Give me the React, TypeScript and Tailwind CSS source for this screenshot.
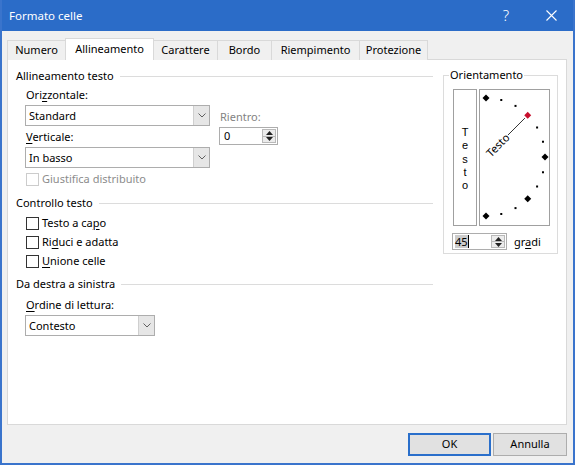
import React from "react";

function Chevron() {
  return (
    <svg width="8" height="5" viewBox="0 0 8 5">
      <path d="M0.5 0.5 L4 4 L7.5 0.5" stroke="#606060" strokeWidth="1" fill="none" />
    </svg>
  );
}

function Combo({ className, text }: { className: string; text: string }) {
  return (
    <div className={`flex h-[21px] border border-[#adadad] bg-white ${className}`}>
      <div className="flex-1 pl-[3px] leading-[19px]">{text}</div>
      <div className="w-[16px] border-l border-[#cfcfcf] bg-[#e6e6e6] flex items-center justify-center">
        <Chevron />
      </div>
    </div>
  );
}

function SpinButtons() {
  return (
    <div className="w-[14px] my-[1px] mr-[1px] flex flex-col border border-[#b9b9b9] bg-[#ececec]">
      <div className="flex-1 flex items-center justify-center">
        <svg width="7" height="4" viewBox="0 0 7 4">
          <polygon points="0,4 3.5,0 7,4" fill="#222" />
        </svg>
      </div>
      <div className="flex-1 flex items-center justify-center border-t border-[#b9b9b9]">
        <svg width="7" height="4" viewBox="0 0 7 4">
          <polygon points="0,0 3.5,4 7,0" fill="#222" />
        </svg>
      </div>
    </div>
  );
}

function Header({ children }: { children: React.ReactNode }) {
  return (
    <div className="flex items-center h-[16px] leading-[16px]">
      <span>{children}</span>
      <div className="flex-1 h-px bg-[#dcdcdc] ml-[6px]" />
    </div>
  );
}

function Check({ className, children, disabled }: { className: string; children: React.ReactNode; disabled?: boolean }) {
  return (
    <div className={`flex items-center h-[16px] leading-[16px] pl-[10px] ${className}`}>
      <div className={`w-[13px] h-[13px] border bg-white ${disabled ? "border-[#cccccc]" : "border-[#333333]"}`} />
      <span className={`ml-[3px] ${disabled ? "text-[#8c8c8c]" : ""}`}>{children}</span>
    </div>
  );
}

function Dial() {
  const cx = 6;
  const cy = 67;
  const r = 59;
  const items: React.ReactNode[] = [];
  for (let a = 90; a >= -90; a -= 15) {
    const rad = (a * Math.PI) / 180;
    const x = cx + r * Math.cos(rad);
    const y = cy - r * Math.sin(rad);
    if (a % 45 === 0) {
      const d = 3.5;
      items.push(
        <polygon
          key={a}
          points={`${x},${y - d} ${x + d},${y} ${x},${y + d} ${x - d},${y}`}
          fill={a === 45 ? "#c8102e" : "#000"}
        />
      );
    } else {
      items.push(<rect key={a} x={x - 1} y={y - 1} width="2" height="2" fill="#000" />);
    }
  }
  const c = Math.SQRT1_2;
  return (
    <svg width="69" height="135" viewBox="0 0 69 135">
      {items}
      <line x1={cx + 31 * c} y1={cy - 31 * c} x2={cx + 55 * c} y2={cy - 55 * c} stroke="#000" strokeWidth="0.8" />
      <text
        x={cx + 3}
        y={cy + 4}
        transform={`rotate(-45 ${cx} ${cy})`}
        fontSize="11"
        fontFamily="'Noto Sans', sans-serif"
        fill="#000"
      >
        Testo
      </text>
    </svg>
  );
}

export default function App() {
  const tabs = [
    { label: "Numero", w: "w-[59px]" },
    { label: "Allineamento", w: "w-[89px]" },
    { label: "Carattere", w: "w-[65px]" },
    { label: "Bordo", w: "w-[55px]" },
    { label: "Riempimento", w: "w-[89px]" },
    { label: "Protezione", w: "w-[69px]" },
  ];
  return (
    <div className="w-[575px] h-[465px] bg-[#f0f0f0] flex flex-col border-x-2 border-b-2 border-[#3a74cc] font-['Noto_Sans',sans-serif] text-[11px] text-black overflow-hidden">
      {/* Title bar */}
      <div className="h-[31px] shrink-0 bg-[#2b6cc8] flex items-center text-white">
        <div className="flex-1 pl-[7px] text-[11.5px]">Formato celle</div>
        <div className="w-[46px] flex items-center justify-center text-[15px] font-light">?</div>
        <div className="w-[44px] flex items-center justify-center">
          <svg width="11" height="11" viewBox="0 0 11 11">
            <path d="M0.5 0.5 L10.5 10.5 M10.5 0.5 L0.5 10.5" stroke="#fff" strokeWidth="1.1" />
          </svg>
        </div>
      </div>

      <div className="pl-[5px]">
        {/* Tabs */}
        <div className="mt-[7px] h-[22px] flex items-end">
          {tabs.map((t, i) => {
            const sel = i === 1;
            return (
              <div
                key={t.label}
                className={`${t.w} ${i > 0 ? "-ml-px" : ""} border-x border-t border-[#d9d9d9] flex items-center justify-center ${
                  sel ? "h-[22px] bg-white relative z-10" : "h-[20px] bg-[#f0f0f0]"
                }`}
              >
                {t.label}
              </div>
            );
          })}
        </div>

        {/* Panel */}
        <div className="-mt-px w-[560px] h-[366px] bg-white border border-[#d9d9d9] flex pl-[8px] pt-[8px]">
          {/* Left column */}
          <div className="w-[417px] flex flex-col">
            <Header>Allineamento testo</Header>
            <div className="flex pl-[9px]">
              <div className="w-[185px] flex flex-col">
                <div className="mt-[3px] h-[16px] leading-[16px] pl-[1px]">
                  Ori<u className="underline-offset-2">z</u>zontale:
                </div>
                <Combo className="mt-[2px] w-[185px]" text="Standard" />
                <div className="mt-[3px] h-[16px] leading-[16px] pl-[1px]">
                  <u className="underline-offset-2">V</u>erticale:
                </div>
                <Combo className="mt-[2px] w-[185px]" text="In basso" />
              </div>
              <div className="ml-[9px] flex flex-col">
                <div className="mt-[25px] h-[16px] leading-[16px] pl-[1px] text-[#838383]">Rientro:</div>
                <div className="mt-[2px] w-[59px] h-[18px] flex border border-[#adadad] bg-white">
                  <div className="flex-1 pl-[4px] leading-[16px]">0</div>
                  <SpinButtons />
                </div>
              </div>
            </div>
            <Check className="mt-[3px]" disabled>
              Giustifica distribuito
            </Check>

            <div className="mt-[8px]">
              <Header>Controllo testo</Header>
            </div>
            <Check className="mt-[4px]">
              Testo a ca<u className="underline-offset-2">p</u>o
            </Check>
            <Check className="mt-[3px]">
              Ri<u className="underline-offset-2">d</u>uci e adatta
            </Check>
            <Check className="mt-[3px]">
              <u className="underline-offset-2">U</u>nione celle
            </Check>

            <div className="mt-[7px]">
              <Header>Da destra a sinistra</Header>
            </div>
            <div className="mt-[5px] h-[16px] leading-[16px] pl-[10px]">
              <u className="underline-offset-2">O</u>rdine di lettura:
            </div>
            <div className="pl-[9px]">
              <Combo className="mt-[2px] w-[130px]" text="Contesto" />
            </div>
          </div>

          {/* Orientamento */}
          <fieldset className="ml-[10px] -mt-px w-[115px] h-[187px] self-start border border-[#dcdcdc]">
            <legend className="ml-[5px] px-[1px] leading-[16px]">Orientamento</legend>
            <div className="ml-[9px] mt-[6px] flex">
              <div className="w-[24px] h-[137px] border border-[#a0a0a0] flex flex-col items-center pt-[36px] font-['Liberation_Sans',sans-serif] text-[11px]">
                <span className="block h-[13.3px] leading-[13.3px]">T</span>
                <span className="block h-[13.3px] leading-[13.3px]">e</span>
                <span className="block h-[13.3px] leading-[13.3px]">s</span>
                <span className="block h-[13.3px] leading-[13.3px]">t</span>
                <span className="block h-[13.3px] leading-[13.3px]">o</span>
              </div>
              <div className="ml-[2px] w-[71px] h-[137px] border border-[#a0a0a0]">
                <Dial />
              </div>
            </div>
            <div className="ml-[8px] mt-[7px] flex items-center">
              <div className="w-[55px] h-[17px] flex border border-[#adadad] bg-white">
                <div className="flex-1 pl-[2px] flex items-center">
                  <span className="bg-[#cccccc] leading-[13px]">45</span>
                  <span className="w-px h-[13px] bg-black" />
                </div>
                <SpinButtons />
              </div>
              <div className="ml-[7px] leading-[16px]">
                gr<u className="underline-offset-2">a</u>di
              </div>
            </div>
          </fieldset>
        </div>

        {/* Buttons */}
        <div className="mt-[8px] flex justify-end w-[560px]">
          <div className="w-[83px] h-[23px] bg-[#e1e1e1] border-2 border-[#2a6fcb] flex items-center justify-center">
            OK
          </div>
          <div className="ml-[2px] w-[74px] h-[23px] bg-[#e1e1e1] border border-[#adadad] flex items-center justify-center">
            Annulla
          </div>
        </div>
      </div>
    </div>
  );
}
